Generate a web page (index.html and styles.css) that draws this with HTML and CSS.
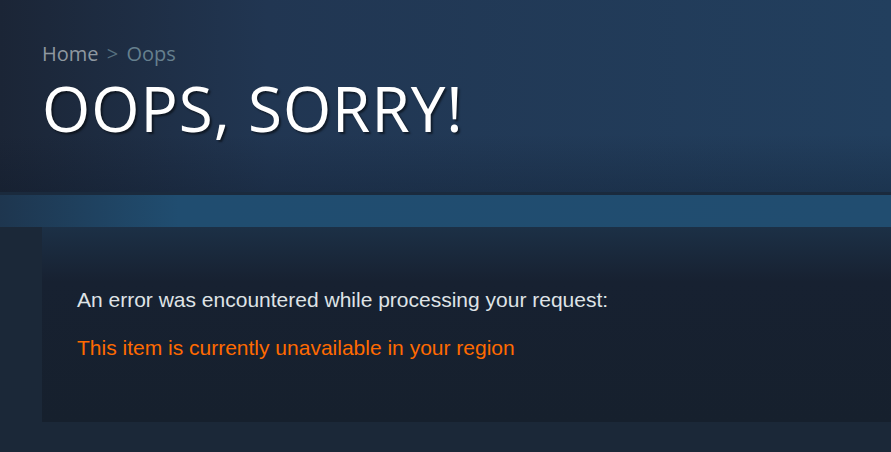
FILE: index.html
```html
<!DOCTYPE html>
<html lang="en">
<head>
  <meta charset="UTF-8">
  <meta name="viewport" content="width=device-width, initial-scale=1.0">
  <title>Oops, sorry!</title>
  <link rel="stylesheet" href="styles.css">
</head>
<body>
  <div class="page-header">
    <div class="breadcrumbs">
      <a href="#" class="crumb">Home</a>
      <span class="sep">&gt;</span>
      <span class="current">Oops</span>
    </div>
    <h1 class="title">OOPS, SORRY!</h1>
  </div>

  <div class="band"></div>

  <div class="content">
    <div class="error-panel">
      <h3 class="error-intro">An error was encountered while processing your request:</h3>
      <div class="error-msg">This item is currently unavailable in your region</div>
    </div>
  </div>
</body>
</html>
```

FILE: styles.css
```css
body {
  margin: 0;
  background-color: #1b2838;
  font-family: Arial, "Liberation Sans", sans-serif;
  color: #c6d4df;
  overflow: hidden;
}
.page-header {
  height: 195px;
  box-sizing: border-box;
  padding: 40px 42px 0;
  background:
    linear-gradient(to bottom, rgba(0, 0, 0, 0) 70%, rgba(10, 20, 35, 0.25) 100%),
    linear-gradient(to right, #1b2536 0%, #213652 30%, #223f5e 100%);
  border-bottom: 3px solid #1a2a3d;
}
.breadcrumbs {
  font-family: "Open Sans", sans-serif;
  font-size: 20px;
  line-height: 28px;
  color: #56707f;
}
.breadcrumbs .crumb {
  color: #8f98a0;
  text-decoration: none;
}
.breadcrumbs .sep {
  margin: 0 3px;
  color: #56707f;
}
.breadcrumbs .current {
  color: #66808e;
}
.title {
  margin: 0;
  font-family: "Open Sans", sans-serif;
  font-weight: 400;
  font-size: 62px;
  line-height: 80px;
  letter-spacing: 1px;
  color: #fff;
  text-shadow: 2px 2px 2px rgba(0, 0, 0, 0.5);
}
.band {
  height: 32px;
  background: linear-gradient(to right, #1e364f 0%, #204d70 20%, #214d70 100%);
}
.content {
  padding-left: 42px;
  padding-bottom: 30px;
}
.error-panel {
  height: 195px;
  box-sizing: border-box;
  padding: 60px 35px 0;
  background: linear-gradient(to bottom, #1c3046 0%, #172131 28%, #16202d 100%);
}
.error-intro {
  margin: 0;
  font-weight: normal;
  font-size: 21px;
  line-height: 26px;
  color: #dfe3e6;
}
.error-msg {
  margin-top: 22px;
  font-size: 21px;
  line-height: 26px;
  color: #ff6a00;
}
```
